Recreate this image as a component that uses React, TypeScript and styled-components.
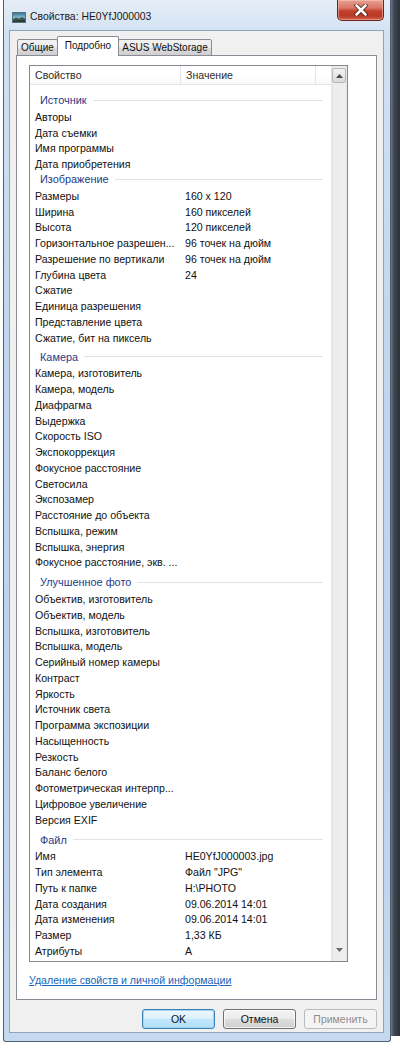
import React from "react";
import styled, { createGlobalStyle } from "styled-components";

const Global = createGlobalStyle`
  html, body { margin: 0; padding: 0; background: #ffffff; }
  body { width: 400px; height: 1050px; overflow: hidden; font-family: "Liberation Sans", Arial, sans-serif; }
  * { box-sizing: border-box; }
`;

const Page = styled.div`
  display: flex;
  align-items: flex-start;
  width: 400px;
  height: 1050px;
  padding-left: 3px;
`;

const Window = styled.div`
  width: 388px;
  height: 1042px;
  border: 1px solid #4f5e71;
  border-top: none;
  border-radius: 0 0 3px 3px;
  background: linear-gradient(180deg, #e6eef8 0%, #d3e2f2 3%, #c2d7ee 30%, #bcd3ec 70%, #c5d9ef 100%);
  display: flex;
  flex-direction: column;
  padding: 0 6px 8px 5px;
`;

const Shade = styled.div`
  width: 9px;
  height: 1036px;
  background: linear-gradient(90deg, #6c7784 0%, #3d4550 35%, #2c3138 100%);
`;

const TitleBar = styled.div`
  display: flex;
  align-items: flex-start;
  height: 30px;
  flex-shrink: 0;
`;

const TitleIcon = styled.svg`
  margin: 12px 4px 0 3px;
  flex-shrink: 0;
`;

const TitleText = styled.div`
  margin-top: 10px;
  font-size: 10.4px;
  line-height: 14px;
  color: #1a1a1a;
`;

const CloseButton = styled.div`
  margin-left: auto;
  width: 47px;
  height: 21px;
  border: 1px solid #6e2219;
  border-top: none;
  border-radius: 0 0 5px 5px;
  background: linear-gradient(180deg, #e7a293 0%, #d87563 40%, #c2402c 55%, #b93a27 80%, #d0614b 100%);
  box-shadow: inset 0 0 0 1px rgba(255, 210, 200, 0.45);
  display: flex;
  align-items: center;
  justify-content: center;
`;

const Face = styled.div`
  flex: 1;
  background: #f0f0f0;
  border: 1px solid #8fa3bb;
  display: flex;
  flex-direction: column;
  padding: 5px 6px 0 6px;
`;

const TabStrip = styled.div`
  display: flex;
  align-items: flex-end;
  height: 20px;
  padding-left: 1px;
  margin-bottom: -1px;
  position: relative;
  z-index: 1;
`;

const Tab = styled.div<{ $active?: boolean; $w: number }>`
  width: ${(p) => p.$w}px;
  height: ${(p) => (p.$active ? 20 : 17)}px;
  margin: ${(p) => (p.$active ? "0 -1px" : "0")};
  border: 1px solid #898c95;
  border-bottom: ${(p) => (p.$active ? "none" : "1px solid #898c95")};
  border-radius: 2px 2px 0 0;
  background: ${(p) =>
    p.$active ? "#ffffff" : "linear-gradient(180deg, #f2f2f2 0%, #ebebeb 50%, #dddddd 51%, #cfcfcf 100%)"};
  position: relative;
  z-index: ${(p) => (p.$active ? 2 : 1)};
  display: flex;
  align-items: center;
  justify-content: center;
  font-size: 10px;
  line-height: 14px;
  padding-bottom: ${(p) => (p.$active ? "2px" : "0")};
  color: #111;
  white-space: nowrap;
`;

const Panel = styled.div`
  height: 945px;
  flex-shrink: 0;
  border: 1px solid #898c95;
  background: #ffffff;
  display: flex;
  flex-direction: column;
  padding: 9px 28px 0 12px;
`;

const ListView = styled.div`
  width: 319px;
  height: 897px;
  flex-shrink: 0;
  border: 1px solid #828790;
  display: flex;
  background: #ffffff;
`;

const ListContent = styled.div`
  flex: 1;
  display: flex;
  flex-direction: column;
  overflow: hidden;
`;

const Header = styled.div`
  display: flex;
  height: 19px;
  flex-shrink: 0;
  border-bottom: 1px solid #e4e6ea;
  background: linear-gradient(180deg, #ffffff 0%, #ffffff 60%, #f7f8fa 100%);
`;

const HeaderCell = styled.div<{ $w?: number }>`
  width: ${(p) => (p.$w ? `${p.$w}px` : "auto")};
  flex: ${(p) => (p.$w ? "0 0 auto" : "1")};
  border-right: ${(p) => (p.$w ? "1px solid #e4e6ea" : "none")};
  padding-left: 5px;
  display: flex;
  align-items: center;
  font-size: 10.6px;
  color: #2c2c2c;
  white-space: nowrap;
`;

const Body = styled.div`
  padding-top: 4px;
  display: flex;
  flex-direction: column;
`;

const Group = styled.div<{ $h: number }>`
  height: ${(p) => p.$h}px;
  display: flex;
  align-items: flex-end;
  padding: 0 8px 2px 10px;
`;

const GroupInner = styled.div`
  display: flex;
  align-items: center;
  width: 100%;
  height: 14px;
`;

const GroupLabel = styled.span`
  font-size: 10.9px;
  color: #1f3a8a;
  white-space: nowrap;
`;

const GroupLine = styled.div`
  flex: 1;
  height: 1px;
  margin-left: 6px;
  background: #dfe3ea;
`;

const Row = styled.div`
  height: 15.75px;
  display: flex;
  align-items: center;
  font-size: 10.6px;
  color: #111111;
  white-space: nowrap;
`;

const PropCell = styled.div`
  width: 150px;
  flex-shrink: 0;
  padding-left: 5px;
  overflow: hidden;
`;

const ValueCell = styled.div`
  padding-left: 5px;
`;

const ScrollBar = styled.div`
  width: 16px;
  flex-shrink: 0;
  background: linear-gradient(90deg, #e2e2e2 0%, #ececec 15%, #efefef 85%, #e6e6e6 100%);
  display: flex;
  flex-direction: column;
  align-items: center;
  justify-content: space-between;
  padding: 2px 0 4px;
`;

const ScrollUp = styled.div`
  width: 14px;
  height: 15px;
  border: 1px solid #b7b7b7;
  border-radius: 2px;
  background: linear-gradient(180deg, #f4f4f4 0%, #e6e6e6 50%, #d9d9d9 100%);
  display: flex;
  align-items: center;
  justify-content: center;
`;

const ScrollDown = styled.div`
  width: 14px;
  height: 15px;
  display: flex;
  align-items: center;
  justify-content: center;
`;

const Link = styled.a`
  margin-top: 11px;
  font-size: 10.6px;
  line-height: 14px;
  color: #1a64b8;
  text-decoration: underline;
  align-self: flex-start;
  cursor: pointer;
`;

const ButtonRow = styled.div`
  display: flex;
  justify-content: flex-end;
  gap: 8px;
  margin-top: 9px;
`;

const Button = styled.div<{ $variant?: "default" | "normal" | "disabled" }>`
  width: 73px;
  height: 20px;
  border-radius: 3px;
  display: flex;
  align-items: center;
  justify-content: center;
  font-size: 10.5px;
  border: 1px solid
    ${(p) => (p.$variant === "default" ? "#3c7fb1" : p.$variant === "disabled" ? "#b8bcbf" : "#707070")};
  color: ${(p) => (p.$variant === "disabled" ? "#8d8d8d" : "#111")};
  background: ${(p) =>
    p.$variant === "default"
      ? "linear-gradient(180deg, #ecf7fd 0%, #dcf1fc 50%, #c3e7fc 51%, #b0dff8 100%)"
      : p.$variant === "disabled"
      ? "#f4f4f4"
      : "linear-gradient(180deg, #f4f4f4 0%, #ebebeb 50%, #dddddd 51%, #d0d0d0 100%)"};
  box-shadow: ${(p) =>
    p.$variant === "default"
      ? "inset 0 0 0 1px #9fd6f5"
      : p.$variant === "disabled"
      ? "none"
      : "inset 0 0 0 1px rgba(255,255,255,0.7)"};
`;

type Item = { g: string; h: number } | { p: string; v?: string };

const items: Item[] = [
  { g: "Источник", h: 20 },
  { p: "Авторы" },
  { p: "Дата съемки" },
  { p: "Имя программы" },
  { p: "Дата приобретения" },
  { g: "Изображение", h: 16 },
  { p: "Размеры", v: "160 x 120" },
  { p: "Ширина", v: "160 пикселей" },
  { p: "Высота", v: "120 пикселей" },
  { p: "Горизонтальное разрешен...", v: "96 точек на дюйм" },
  { p: "Разрешение по вертикали", v: "96 точек на дюйм" },
  { p: "Глубина цвета", v: "24" },
  { p: "Сжатие" },
  { p: "Единица разрешения" },
  { p: "Представление цвета" },
  { p: "Сжатие, бит на пиксель" },
  { g: "Камера", h: 20 },
  { p: "Камера, изготовитель" },
  { p: "Камера, модель" },
  { p: "Диафрагма" },
  { p: "Выдержка" },
  { p: "Скорость ISO" },
  { p: "Экспокоррекция" },
  { p: "Фокусное расстояние" },
  { p: "Светосила" },
  { p: "Экспозамер" },
  { p: "Расстояние до объекта" },
  { p: "Вспышка, режим" },
  { p: "Вспышка, энергия" },
  { p: "Фокусное расстояние, экв. ..." },
  { g: "Улучшенное фото", h: 21 },
  { p: "Объектив, изготовитель" },
  { p: "Объектив, модель" },
  { p: "Вспышка, изготовитель" },
  { p: "Вспышка, модель" },
  { p: "Серийный номер камеры" },
  { p: "Контраст" },
  { p: "Яркость" },
  { p: "Источник света" },
  { p: "Программа экспозиции" },
  { p: "Насыщенность" },
  { p: "Резкость" },
  { p: "Баланс белого" },
  { p: "Фотометрическая интерпр..." },
  { p: "Цифровое увеличение" },
  { p: "Версия EXIF" },
  { g: "Файл", h: 21 },
  { p: "Имя", v: "HE0YfJ000003.jpg" },
  { p: "Тип элемента", v: "Файл \"JPG\"" },
  { p: "Путь к папке", v: "H:\\PHOTO" },
  { p: "Дата создания", v: "09.06.2014 14:01" },
  { p: "Дата изменения", v: "09.06.2014 14:01" },
  { p: "Размер", v: "1,33 КБ" },
  { p: "Атрибуты", v: "A" },
];

function PictureIcon() {
  return (
    <TitleIcon width="14" height="11" viewBox="0 0 14 11">
      <defs>
        <linearGradient id="sky" x1="0" y1="0" x2="0" y2="1">
          <stop offset="0" stopColor="#2f6f8f" />
          <stop offset="0.55" stopColor="#8cc4da" />
          <stop offset="1" stopColor="#d7ecf2" />
        </linearGradient>
      </defs>
      <rect x="0.5" y="0.5" width="13" height="10" fill="url(#sky)" stroke="#56707d" />
      <path d="M1 7 L4 5.5 L7 6.5 L10 5 L13 6.5 L13 10 L1 10 Z" fill="#3b5a4c" />
      <path d="M1 8.5 L13 8 L13 10 L1 10 Z" fill="#26393a" />
    </TitleIcon>
  );
}

function CloseGlyph() {
  return (
    <svg width="14" height="12" viewBox="0 0 14 12">
      <path d="M2.5 1.5 L11.5 10.5 M11.5 1.5 L2.5 10.5" stroke="#4a1610" strokeWidth="4.2" strokeLinecap="round" />
      <path d="M2.5 1.5 L11.5 10.5 M11.5 1.5 L2.5 10.5" stroke="#ffffff" strokeWidth="2.6" strokeLinecap="round" />
    </svg>
  );
}

function Arrow({ up }: { up?: boolean }) {
  return (
    <svg width="7" height="4" viewBox="0 0 7 4">
      <path d={up ? "M0 4 L3.5 0 L7 4 Z" : "M0 0 L7 0 L3.5 4 Z"} fill={up ? "#4d4d4d" : "#6a6a6a"} />
    </svg>
  );
}

export default function App() {
  return (
    <>
      <Global />
      <Page>
        <Window>
          <TitleBar>
            <PictureIcon />
            <TitleText>Свойства: HE0YfJ000003</TitleText>
            <CloseButton>
              <CloseGlyph />
            </CloseButton>
          </TitleBar>
          <Face>
            <TabStrip>
              <Tab $w={41}>Общие</Tab>
              <Tab $w={62} $active>
                Подробно
              </Tab>
              <Tab $w={94}>ASUS WebStorage</Tab>
            </TabStrip>
            <Panel>
              <ListView>
                <ListContent>
                  <Header>
                    <HeaderCell $w={151}>Свойство</HeaderCell>
                    <HeaderCell $w={135}>Значение</HeaderCell>
                    <HeaderCell />
                  </Header>
                  <Body>
                    {items.map((it, i) =>
                      "g" in it ? (
                        <Group key={i} $h={it.h}>
                          <GroupInner>
                            <GroupLabel>{it.g}</GroupLabel>
                            <GroupLine />
                          </GroupInner>
                        </Group>
                      ) : (
                        <Row key={i}>
                          <PropCell>{it.p}</PropCell>
                          {it.v && <ValueCell>{it.v}</ValueCell>}
                        </Row>
                      )
                    )}
                  </Body>
                </ListContent>
                <ScrollBar>
                  <ScrollUp>
                    <Arrow up />
                  </ScrollUp>
                  <ScrollDown>
                    <Arrow />
                  </ScrollDown>
                </ScrollBar>
              </ListView>
              <Link>Удаление свойств и личной информации</Link>
            </Panel>
            <ButtonRow>
              <Button $variant="default">OK</Button>
              <Button>Отмена</Button>
              <Button $variant="disabled">Применить</Button>
            </ButtonRow>
          </Face>
        </Window>
        <Shade />
      </Page>
    </>
  );
}
